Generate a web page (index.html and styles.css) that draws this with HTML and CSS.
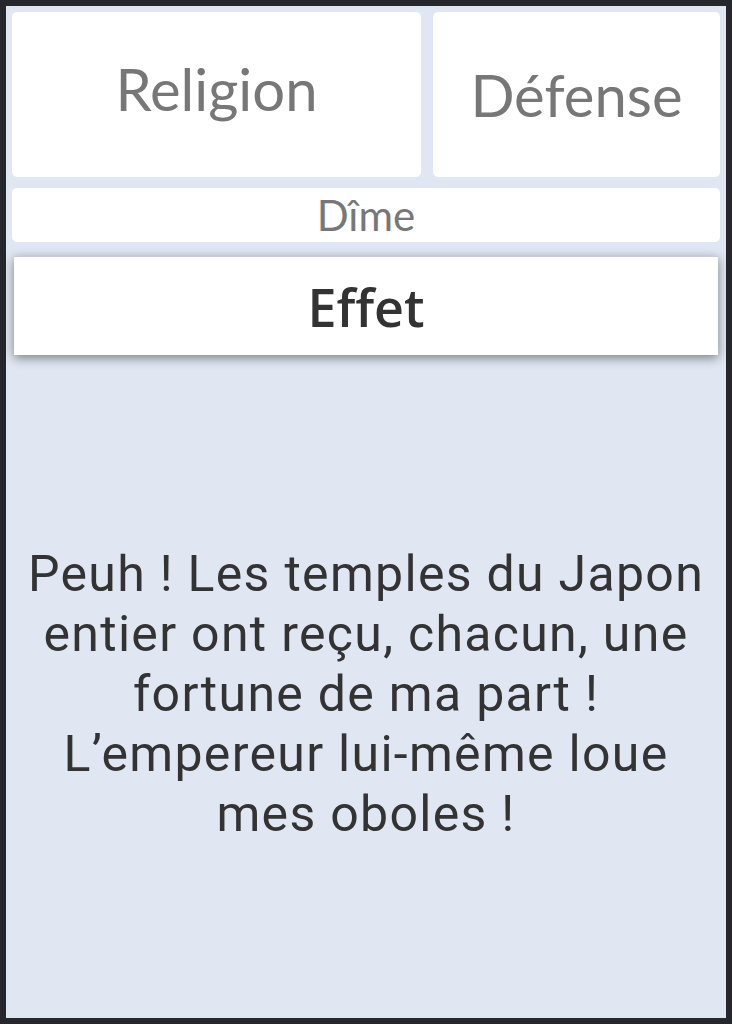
FILE: index.html
```html
<!DOCTYPE html>
<html lang="fr">
<head>
<meta charset="utf-8">
<title>Effet</title>
<link rel="stylesheet" href="styles.css">
</head>
<body>
<div class="app">
  <div class="tabs">
    <div class="card card-religion">Religion</div>
    <div class="card card-defense">Défense</div>
  </div>
  <div class="card card-dime">Dîme</div>
  <div class="effet">Effet</div>
  <div class="message">
    <p>Peuh ! Les temples du Japon<br>entier ont reçu, chacun, une<br>fortune de ma part !<br>L’empereur lui-même loue<br>mes oboles !</p>
  </div>
</div>
</body>
</html>
```

FILE: styles.css
```css
html, body {
  margin: 0;
  padding: 0;
}
body {
  background: #25272c;
  width: 732px;
  height: 1024px;
  overflow: hidden;
}
.app {
  margin: 6px;
  height: 1012px;
  box-sizing: border-box;
  background: #e0e6f2;
  padding: 6px 6px 0 6px;
  display: flex;
  flex-direction: column;
}
.tabs {
  display: grid;
  grid-template-columns: 409px 1fr;
  gap: 12px;
}
.card {
  background: #ffffff;
  border-radius: 5px;
  color: #777777;
  font-family: Lato, "Liberation Sans", sans-serif;
  display: flex;
  align-items: center;
  justify-content: center;
}
.card-religion,
.card-defense {
  height: 165px;
  font-size: 58px;
}
.card-religion {
  padding-bottom: 12px;
  box-sizing: border-box;
}
.card-dime {
  margin-top: 11px;
  height: 54px;
  font-size: 42px;
}
.effet {
  margin: 14px 2px 0 2px;
  height: 99px;
  background: #ffffff;
  color: #333333;
  font-family: "Open Sans", "Noto Sans", sans-serif;
  font-weight: 600;
  font-size: 52px;
  display: flex;
  align-items: center;
  justify-content: center;
  box-shadow: 0 3px 10px rgba(0, 0, 0, 0.45);
  border-top: 1px solid #c9ccd3;
  box-sizing: border-box;
}
.message {
  flex: 1;
  display: flex;
  align-items: center;
  justify-content: center;
  padding-top: 14px;
}
.message p {
  margin: 0;
  text-align: center;
  color: #333333;
  font-family: Roboto, "Noto Sans", sans-serif;
  font-size: 50px;
  line-height: 60px;
  letter-spacing: 1.3px;
}
```
